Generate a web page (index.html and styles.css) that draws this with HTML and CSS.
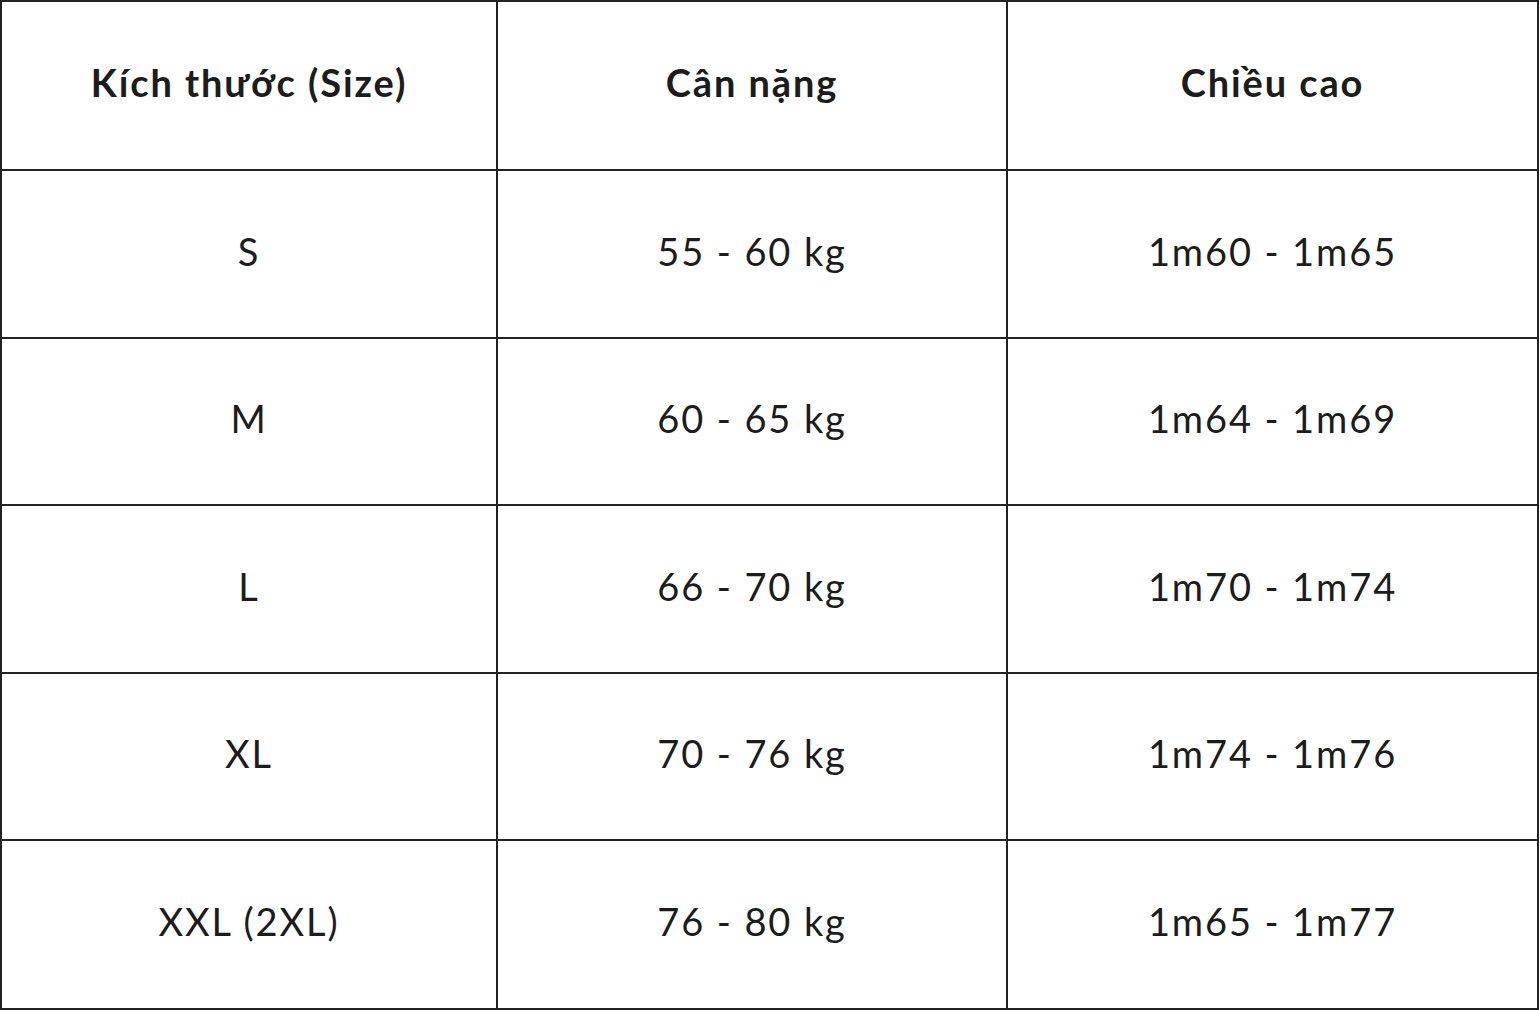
FILE: index.html
```html
<!DOCTYPE html>
<html lang="vi">
<head>
<meta charset="utf-8">
<title>Bảng size</title>
<link rel="stylesheet" href="styles.css">
</head>
<body>
<table class="size-table">
  <colgroup>
    <col class="c1"><col class="c2"><col class="c3">
  </colgroup>
  <thead>
    <tr class="r-head"><th>Kích thước (Size)</th><th>Cân nặng</th><th>Chiều cao</th></tr>
  </thead>
  <tbody>
    <tr class="r-a"><td>S</td><td>55 - 60 kg</td><td>1m60 - 1m65</td></tr>
    <tr class="r-b"><td>M</td><td>60 - 65 kg</td><td>1m64 - 1m69</td></tr>
    <tr class="r-a"><td>L</td><td>66 - 70 kg</td><td>1m70 - 1m74</td></tr>
    <tr class="r-b"><td>XL</td><td>70 - 76 kg</td><td>1m74 - 1m76</td></tr>
    <tr class="r-last"><td>XXL (2XL)</td><td>76 - 80 kg</td><td>1m65 - 1m77</td></tr>
  </tbody>
</table>
</body>
</html>
```
FILE: styles.css
```css
html, body {
  margin: 0;
  padding: 0;
  background: #fff;
}
.size-table {
  width: 1539px;
  border-collapse: collapse;
  table-layout: fixed;
  font-family: "Lato", "Noto Sans", sans-serif;
  color: #1c1c1c;
}
.c1 { width: 496px; }
.c2 { width: 510px; }
.c3 { width: 531px; }
.r-head { height: 169px; }
.r-a { height: 168px; }
.r-b { height: 167px; }
.r-last { height: 169px; }
.size-table th,
.size-table td {
  border: 2px solid #222;
  text-align: center;
  vertical-align: middle;
  padding: 0 0 7px 0;
  font-size: 38px;
  letter-spacing: 1.9px;
}
.size-table th {
  font-weight: 700;
  padding-bottom: 8px;
}
.size-table td {
  font-weight: 400;
}
```
